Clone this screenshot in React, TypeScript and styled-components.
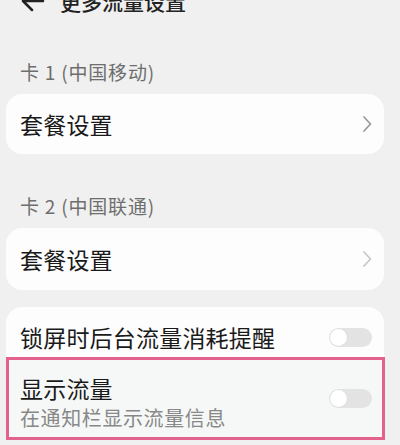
import React from 'react'
import styled, { createGlobalStyle } from 'styled-components'

const Global = createGlobalStyle`
	html, body {
		margin: 0;
		padding: 0;
		background: #f0f0f0;
		overflow: hidden;
	}
	body {
		font-family: "Noto Sans CJK SC", "Noto Sans", sans-serif;
		color: #1a1a1a;
	}
`

const Page = styled.div`
	width: 400px;
	height: 445px;
	display: flex;
	flex-direction: column;
`

const Header = styled.div`
	height: 12px;
	display: flex;
	align-items: flex-end;
	gap: 14px;
	padding-left: 20px;
`

const Title = styled.div`
	font-size: 21px;
	line-height: 21px;
	font-weight: 500;
	color: #222;
`

const SectionLabel = styled.div<{ first?: boolean }>`
	margin-top: ${p => (p.first ? '51px' : '43px')};
	padding: 0 20px 13px;
	font-size: 19px;
	line-height: 18px;
	letter-spacing: 0.8px;
	color: #6e6e6e;
`

const Card = styled.div<{ spaced?: boolean }>`
	margin: ${p => (p.spaced ? '17px' : '0')} 16px 0 6px;
	background: #fdfdfd;
	border-radius: 16px;
	display: flex;
	flex-direction: column;
`

const Row = styled.div<{ height: number; top?: number }>`
	height: ${p => p.height}px;
	box-sizing: border-box;
	padding: ${p => p.top ?? 0}px 12px 0 14px;
	display: flex;
	align-items: center;
	justify-content: space-between;
`

const HighlightRow = styled.div`
	height: 83px;
	box-sizing: border-box;
	margin-right: -1px;
	border: 3px solid #e2628c;
	background: #f6f8f8;
	padding: 15px 10px 8px 11px;
	display: flex;
	align-items: center;
	justify-content: space-between;
`

const Texts = styled.div`
	display: flex;
	flex-direction: column;
	gap: 6px;
`

const RowTitle = styled.div`
	font-size: 23px;
	line-height: 26px;
	letter-spacing: 0.2px;
	color: #1a1a1a;
`

const RowSub = styled.div`
	font-size: 20px;
	line-height: 22px;
	letter-spacing: 0.6px;
	color: #888;
`

const Toggle = styled.div<{ dy?: number }>`
	width: 43px;
	height: 19px;
	border-radius: 10px;
	background: #e3e3e3;
	position: relative;
	flex-shrink: 0;
	margin-top: ${p => p.dy ?? 0}px;

	&::after {
		content: '';
		position: absolute;
		left: 1px;
		top: 1px;
		width: 17px;
		height: 17px;
		border-radius: 50%;
		background: #fff;
		box-shadow: 0 0 0 0.5px #d8d8d8;
	}
`

const Chevron = ({ color }: { color: string }) => (
	<svg width="10" height="18" viewBox="0 0 10 18" fill="none">
		<path d="M2 2 L8.5 9 L2 16" stroke={color} strokeWidth="1.8" strokeLinecap="round" strokeLinejoin="round" />
	</svg>
)

const BackArrow = () => (
	<svg width="26" height="22" viewBox="0 0 26 22" fill="none" style={{ flexShrink: 0 }}>
		<path d="M3 11 L23 11 M12 2 L3 11 L12 20" stroke="#222" strokeWidth="2.5" strokeLinecap="round" strokeLinejoin="round" />
	</svg>
)

export default function App() {
	return (
		<>
			<Global />
			<Page>
				<Header>
					<BackArrow />
					<Title>更多流量设置</Title>
				</Header>

				<SectionLabel first>卡 1 (中国移动)</SectionLabel>
				<Card>
					<Row height={60}>
						<RowTitle>套餐设置</RowTitle>
						<Chevron color="#9a9a9a" />
					</Row>
				</Card>

				<SectionLabel>卡 2 (中国联通)</SectionLabel>
				<Card>
					<Row height={62}>
						<RowTitle>套餐设置</RowTitle>
						<Chevron color="#c8c8c8" />
					</Row>
				</Card>

				<Card spaced>
					<Row height={50} top={10}>
						<RowTitle>锁屏时后台流量消耗提醒</RowTitle>
						<Toggle />
					</Row>
					<HighlightRow>
						<Texts>
							<RowTitle>显示流量</RowTitle>
							<RowSub>在通知栏显示流量信息</RowSub>
						</Texts>
						<Toggle dy={-7} />
					</HighlightRow>
				</Card>
			</Page>
		</>
	)
}
